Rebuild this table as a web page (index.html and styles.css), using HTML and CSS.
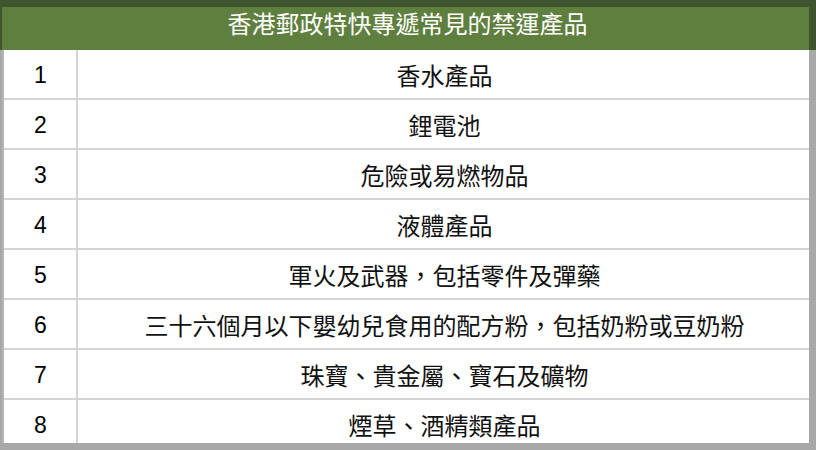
FILE: index.html
```html
<!DOCTYPE html>
<html lang="zh-Hant">
<head>
<meta charset="utf-8">
<title>香港郵政特快專遞常見的禁運產品</title>
<link rel="stylesheet" href="styles.css">
</head>
<body>
<div class="page">
  <div class="head-wrap">
    <div class="head">香港郵政特快專遞常見的禁運產品</div>
  </div>
  <div class="rows">
    <div class="row"><div class="num">1</div><div class="item">香水產品</div></div>
    <div class="row"><div class="num">2</div><div class="item">鋰電池</div></div>
    <div class="row"><div class="num">3</div><div class="item">危險或易燃物品</div></div>
    <div class="row"><div class="num">4</div><div class="item">液體產品</div></div>
    <div class="row"><div class="num">5</div><div class="item">軍火及武器，包括零件及彈藥</div></div>
    <div class="row"><div class="num">6</div><div class="item">三十六個月以下嬰幼兒食用的配方粉，包括奶粉或豆奶粉</div></div>
    <div class="row"><div class="num">7</div><div class="item">珠寶、貴金屬、寶石及礦物</div></div>
    <div class="row"><div class="num">8</div><div class="item">煙草、酒精類產品</div></div>
  </div>
</div>
</body>
</html>
```

FILE: styles.css
```css
html, body {
  margin: 0;
  padding: 0;
}
body {
  background: #a8a8a8;
  font-family: "Noto Sans CJK TC", "Liberation Sans", sans-serif;
}
.page {
  width: 816px;
  height: 450px;
  overflow: hidden;
  background: #a8a8a8;
  display: flex;
  flex-direction: column;
}
.head-wrap {
  background: #3e552f;
  padding: 7px 7px 0 2px;
  height: 50px;
  box-sizing: border-box;
}
.head {
  background: #5f7f3f;
  height: 43px;
  box-sizing: border-box;
  color: #ffffff;
  font-size: 24px;
  line-height: 32px;
  text-align: center;
  padding-left: 4px;
}
.rows {
  margin: 0 7px 0 2px;
  border-left: 2px solid #b4b4b4;
  height: 393px;
  overflow: hidden;
  background: #ffffff;
}
.row {
  display: grid;
  grid-template-columns: 74px 1fr;
  height: 50px;
  box-sizing: border-box;
  border-bottom: 2px solid #d4d4d4;
}
.num {
  border-right: 2px solid #d4d4d4;
  display: flex;
  align-items: center;
  justify-content: center;
  font-family: "Liberation Sans", sans-serif;
  font-size: 23px;
  color: #000000;
  padding-left: 1px;
  padding-top: 3px;
}
.item {
  display: flex;
  align-items: center;
  justify-content: center;
  font-size: 24px;
  color: #111111;
  padding-left: 2px;
}
```
